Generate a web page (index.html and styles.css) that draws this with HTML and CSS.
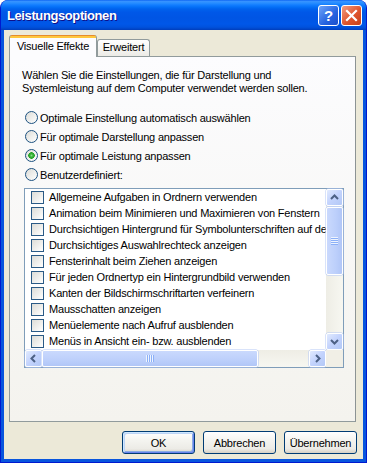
FILE: index.html
```html
<!DOCTYPE html>
<html lang="de">
<head>
    <meta charset="UTF-8">
    <title>Leistungsoptionen</title>
    <link rel="stylesheet" href="styles.css">
</head>
<body>
    <div class="window">
        <div class="titlebar">
            <span class="title">Leistungsoptionen</span>
            <span class="cap-btn help">?</span>
            <span class="cap-btn close">
                <svg width="19" height="19" viewBox="0 0 19 19"><path d="M5 5 L14 14 M14 5 L5 14" stroke="#fff" stroke-width="2.2" stroke-linecap="square"/></svg>
            </span>
        </div>
        <div class="client">
            <div class="tabs">
                <div class="tab active">Visuelle Effekte</div>
                <div class="tab">Erweitert</div>
            </div>
            <div class="panel">
                <p class="intro">Wählen Sie die Einstellungen, die für Darstellung und<br>Systemleistung auf dem Computer verwendet werden sollen.</p>
                <div class="options">
                    <div class="option"><span class="radio"></span>Optimale Einstellung automatisch auswählen</div>
                    <div class="option"><span class="radio"></span>Für optimale Darstellung anpassen</div>
                    <div class="option"><span class="radio checked"></span>Für optimale Leistung anpassen</div>
                    <div class="option"><span class="radio"></span>Benutzerdefiniert:</div>
                </div>
                <div class="listbox">
                    <div class="items">
                        <div class="row"><span class="check"></span>Allgemeine Aufgaben in Ordnern verwenden</div>
                        <div class="row"><span class="check"></span>Animation beim Minimieren und Maximieren von Fenstern</div>
                        <div class="row"><span class="check"></span>Durchsichtigen Hintergrund für Symbolunterschriften auf dem Desktop</div>
                        <div class="row"><span class="check"></span>Durchsichtiges Auswahlrechteck anzeigen</div>
                        <div class="row"><span class="check"></span>Fensterinhalt beim Ziehen anzeigen</div>
                        <div class="row"><span class="check"></span>Für jeden Ordnertyp ein Hintergrundbild verwenden</div>
                        <div class="row"><span class="check"></span>Kanten der Bildschirmschriftarten verfeinern</div>
                        <div class="row"><span class="check"></span>Mausschatten anzeigen</div>
                        <div class="row"><span class="check"></span>Menüelemente nach Aufruf ausblenden</div>
                        <div class="row"><span class="check"></span>Menüs in Ansicht ein- bzw. ausblenden</div>
                    </div>
                    <div class="vscroll">
                        <span class="sb-btn"><svg width="15" height="15" viewBox="0 0 15 15"><path d="M4 9 L7.5 5.5 L11 9" fill="none" stroke="#4D6185" stroke-width="2"/></svg></span>
                        <div class="track">
                            <div class="thumb"><span class="grip"></span></div>
                        </div>
                        <span class="sb-btn"><svg width="15" height="15" viewBox="0 0 15 15"><path d="M4 6 L7.5 9.5 L11 6" fill="none" stroke="#4D6185" stroke-width="2"/></svg></span>
                    </div>
                    <div class="hscroll">
                        <span class="sb-btn"><svg width="15" height="15" viewBox="0 0 15 15"><path d="M9 4 L5.5 7.5 L9 11" fill="none" stroke="#4D6185" stroke-width="2"/></svg></span>
                        <div class="track">
                            <div class="thumb"><span class="grip"></span></div>
                        </div>
                        <span class="sb-btn"><svg width="15" height="15" viewBox="0 0 15 15"><path d="M6 4 L9.5 7.5 L6 11" fill="none" stroke="#4D6185" stroke-width="2"/></svg></span>
                    </div>
                    <div class="corner"></div>
                </div>
            </div>
            <div class="buttons">
                <button class="btn default">OK</button>
                <button class="btn">Abbrechen</button>
                <button class="btn">Übernehmen</button>
            </div>
        </div>
    </div>
</body>
</html>
```

FILE: styles.css
```css
body {
    margin: 0;
    background: #fff;
    font-family: 'Liberation Sans', Arial, sans-serif;
    font-size: 11px;
    letter-spacing: -0.2px;
    color: #000;
}

.window {
    width: 367px;
    height: 463px;
    box-sizing: border-box;
    display: flex;
    flex-direction: column;
    background: #0855DD;
    border: 1px solid #0019CF;
    border-top: none;
    border-radius: 8px 8px 0 0;
    overflow: hidden;
}

.titlebar {
    height: 30px;
    flex: none;
    display: flex;
    align-items: center;
    padding: 0 4px 0 6px;
    background: linear-gradient(to bottom, #0058EE 0, #3A93FF 1px, #288EFF 3px, #127DFF 5px, #0470F7 7px, #0062ED 9px, #0058E8 12px, #0055E4 18px, #0057E8 24px, #0052DE 27px, #0045C8 29px, #003DBA 30px);
}

.title {
    flex: 1;
    color: #fff;
    font-weight: bold;
    font-size: 13px;
    letter-spacing: -0.4px;
    text-shadow: 1px 1px #0F1089;
}

.cap-btn {
    width: 21px;
    height: 21px;
    box-sizing: border-box;
    margin-left: 2px;
    border: 1px solid #fff;
    border-radius: 3px;
    display: flex;
    align-items: center;
    justify-content: center;
}

.help {
    background: linear-gradient(135deg, #6DA4F9, #2663E0 60%, #1A4FCB);
    color: #fff;
    font-weight: bold;
    font-size: 15px;
}

.close {
    background: linear-gradient(135deg, #F09C82, #E0552D 55%, #C4401A);
}

.client {
    flex: 1;
    margin: 0 3px 3px;
    background: #ECE9D8;
    padding: 5px 7px 0 5px;
    display: flex;
    flex-direction: column;
}

.tabs {
    display: flex;
    align-items: flex-end;
    height: 21px;
    position: relative;
    z-index: 1;
}

.tab {
    width: 53px;
    height: 17px;
    box-sizing: border-box;
    border: 1px solid #919B9C;
    border-bottom: none;
    border-radius: 3px 3px 0 0;
    background: linear-gradient(#FFFFFF, #ECEBE6);
    line-height: 15px;
    text-align: center;
}

.tab.active {
    width: 88px;
    height: 22px;
    margin-bottom: -1px;
    border-top: none;
    padding-top: 3px;
    line-height: 17px;
    background: linear-gradient(#E68B2C 0, #E68B2C 1px, #FFC73C 1px, #FFC73C 3px, #FCFCFE 3px);
}

.panel {
    height: 366px;
    box-sizing: border-box;
    border: 1px solid #919B9C;
    border-right-color: #8C9394;
    background: linear-gradient(#FCFCFE, #F4F3EE);
    padding: 12px 12px 0;
}

.intro {
    margin: 0;
    line-height: 13px;
}

.options {
    margin-top: 16px;
    display: flex;
    flex-direction: column;
    gap: 6px;
}

.option {
    height: 13px;
    display: flex;
    align-items: center;
}

.radio {
    width: 13px;
    height: 13px;
    box-sizing: border-box;
    margin: 0 2px 0 3px;
    border: 1px solid #1C5180;
    border-radius: 50%;
    background: linear-gradient(135deg, #DCDCD7, #FFFFFF);
    flex: none;
}

.radio.checked {
    background: radial-gradient(circle at 50% 50%, #8BE08B 0, #3DB53D 1.5px, #21A121 3px, transparent 3.5px), linear-gradient(135deg, #DCDCD7, #FFFFFF);
}

.listbox {
    margin: 7px 0 0 2px;
    width: 320px;
    height: 180px;
    box-sizing: border-box;
    border: 1px solid #7F9DB9;
    background: #fff;
    display: grid;
    grid-template-columns: 1fr 17px;
    grid-template-rows: 1fr 17px;
}

.items {
    overflow: hidden;
    white-space: nowrap;
}

.row {
    height: 16px;
    display: flex;
    align-items: center;
    padding-left: 6px;
}

.check {
    width: 13px;
    height: 13px;
    box-sizing: border-box;
    margin-right: 5px;
    border: 1px solid #2A5A86;
    background: linear-gradient(135deg, #DCDCD7, #FFFFFF);
    flex: none;
}

.vscroll,
.hscroll {
    display: flex;
    background: linear-gradient(to right, #EEEDE5, #F7F7F1);
}

.vscroll {
    flex-direction: column;
}

.hscroll {
    background: linear-gradient(#EEEDE5, #F7F7F1);
}

.sb-btn {
    width: 17px;
    height: 17px;
    box-sizing: border-box;
    flex: none;
    border: 1px solid #fff;
    border-radius: 2px;
    background: linear-gradient(135deg, #E1EAFE, #C3D3FD 50%, #B3C8F6);
    box-shadow: 0 0 0 0.5px #B4C8F6;
    display: flex;
    align-items: center;
    justify-content: center;
}

.track {
    flex: 1;
    display: flex;
}

.vscroll .track {
    flex-direction: column;
    padding-top: 1px;
}

.thumb {
    box-sizing: border-box;
    border: 1px solid #fff;
    border-radius: 2px;
    box-shadow: 0 0 0 0.5px #B4C8F6;
    display: flex;
    align-items: center;
    justify-content: center;
}

.vscroll .thumb {
    height: 68px;
    background: linear-gradient(to right, #CAD9FD, #BCCFFB 60%, #B1C6F7);
}

.hscroll .thumb {
    width: 216px;
    background: linear-gradient(#CAD9FD, #BCCFFB 60%, #B1C6F7);
}

.vscroll .grip {
    width: 7px;
    height: 8px;
    background: repeating-linear-gradient(#EEF4FE 0, #EEF4FE 1px, #8CB0F8 1px, #8CB0F8 2px);
}

.hscroll .grip {
    width: 8px;
    height: 7px;
    background: repeating-linear-gradient(to right, #EEF4FE 0, #EEF4FE 1px, #8CB0F8 1px, #8CB0F8 2px);
}

.corner {
    background: #F1EFE6;
}

.buttons {
    display: flex;
    justify-content: flex-end;
    gap: 8px;
    margin: 9px -1px 0 0;
}

.btn {
    width: 73px;
    height: 23px;
    box-sizing: border-box;
    padding: 0;
    border: 1px solid #003C74;
    border-radius: 3px;
    background: linear-gradient(#FFFFFF, #F4F4F0 40%, #ECEBE6 80%, #D6D0C5);
    font-family: 'Liberation Sans', Arial, sans-serif;
    font-size: 11px;
    letter-spacing: -0.2px;
    color: #000;
}

.btn.default {
    box-shadow: inset 1px 1px #CEE7FF, inset -1px -1px #6982EE, inset 2px 2px #BCD4F6, inset -2px -2px #89ADE4;
}
```
